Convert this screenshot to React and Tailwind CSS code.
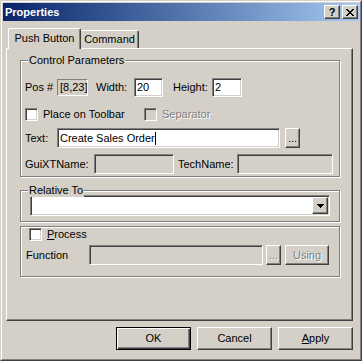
const sunken =
  "border border-t-[#808080] border-l-[#808080] border-r-white border-b-white shadow-[inset_1px_1px_0_#404040,inset_-1px_-1px_0_#d4d0c8]";
const raised =
  "border border-t-white border-l-white border-r-[#404040] border-b-[#404040] shadow-[inset_-1px_-1px_0_#808080]";
const disabledText = "text-[#808080] [text-shadow:1px_1px_0_#fff]";

function Group({ label, className = "", children }) {
  return (
    <div className={`relative border border-[#808080] shadow-[inset_1px_1px_0_#fff,1px_1px_0_#fff] ${className}`}>
      {label && (
        <span className="absolute -top-[8px] left-[7px] bg-[#d4d0c8] px-[1px] leading-[14px]">{label}</span>
      )}
      {children}
    </div>
  );
}

function Checkbox({ disabled }) {
  return <div className={`w-[13px] h-[13px] shrink-0 ${sunken} ${disabled ? "bg-[#d4d0c8]" : "bg-white"}`} />;
}

export default function App() {
  return (
    <div className="w-[362px] h-[361px] bg-[#d4d0c8] text-black text-[11px] font-['Liberation_Sans',Arial,sans-serif] border border-t-[#d4d0c8] border-l-[#d4d0c8] border-r-[#404040] border-b-[#404040]">
      <div className="h-full border border-t-white border-l-white border-r-[#808080] border-b-[#808080] p-[1px]">
        {/* title bar */}
        <div className="h-[18px] flex items-center bg-gradient-to-r from-[#0a246a] to-[#a6caf0] pl-[2px] pr-[1px]">
          <span className="text-white font-bold text-[11px] flex-1">Properties</span>
          <div className={`w-[16px] h-[14px] bg-[#d4d0c8] ${raised} flex items-center justify-center font-bold text-[11px] leading-none`}>
            ?
          </div>
          <div className={`w-[16px] h-[14px] ml-[2px] bg-[#d4d0c8] ${raised} flex items-center justify-center`}>
            <svg width="8" height="7" viewBox="0 0 8 7" shapeRendering="crispEdges">
              <path d="M0 0h2v1H0zM6 0h2v1H6zM1 1h2v1H1zM5 1h2v1H5zM2 2h4v1H2zM3 3h2v1H3zM2 4h4v1H2zM1 5h2v1H1zM5 5h2v1H5zM0 6h2v1H0zM6 6h2v1H6z" fill="#000" />
            </svg>
          </div>
        </div>

        <div className="pl-[3px] pt-[7px]">
          {/* tabs */}
          <div className="h-[20px] flex items-start w-[347px]">
            <div className="relative z-10 ml-[2px] w-[73px] h-[21px] bg-[#d4d0c8] border-t border-l border-white border-r border-r-[#404040] shadow-[inset_-1px_0_0_#808080] rounded-t-[2px] flex items-center justify-center pb-[2px]">
              Push Button
            </div>
            <div className="mt-[2px] w-[58px] h-[18px] border-t border-white border-r border-r-[#404040] shadow-[inset_-1px_0_0_#808080] rounded-tr-[2px] flex items-center justify-center">
              Command
            </div>
          </div>

          {/* tab page */}
          <div className="w-[347px] h-[273px] border border-t-white border-l-white border-r-[#404040] border-b-[#404040] shadow-[inset_-1px_-1px_0_#808080] pl-[13px] pt-[11px]">
            <Group label="Control Parameters" className="w-[320px] h-[117px] pl-[4px] pt-[17px]">
              <div className="flex items-center h-[19px]">
                <span className="w-[32px]">Pos #</span>
                <div className="w-[31px] h-[17px] border border-t-[#808080] border-l-[#808080] border-r-white border-b-white pl-[2px] leading-[15px]">
                  [8,23]
                </div>
                <span className="ml-[8px] w-[38px]">Width:</span>
                <div className={`w-[29px] h-[19px] bg-white ${sunken} pl-[2px] leading-[17px]`}>20</div>
                <span className="ml-[10px] w-[39px]">Height:</span>
                <div className={`w-[30px] h-[19px] bg-white ${sunken} pl-[2px] leading-[17px]`}>2</div>
              </div>
              <div className="flex items-center h-[13px] mt-[11px]">
                <div className="flex items-center w-[119px]">
                  <Checkbox />
                  <span className="ml-[5px]">Place on Toolbar</span>
                </div>
                <Checkbox disabled />
                <span className={`ml-[5px] ${disabledText}`}>Separator</span>
              </div>
              <div className="flex items-center h-[20px] mt-[7px]">
                <span className="w-[32px]">Text:</span>
                <div className={`w-[223px] h-[20px] bg-white ${sunken} pl-[2px] leading-[18px] flex items-center`}>
                  Create Sales Order
                  <span className="inline-block w-px h-[13px] bg-black" />
                </div>
                <div className={`ml-[5px] w-[15px] h-[20px] ${raised} flex items-end justify-center pb-[3px] leading-none`}>...</div>
              </div>
              <div className="flex items-center h-[20px] mt-[6px]">
                <span className="w-[69px]">GuiXTName:</span>
                <div className={`w-[80px] h-[20px] ${sunken}`} />
                <span className="ml-[4px] w-[59px]">TechName:</span>
                <div className={`w-[96px] h-[20px] ${sunken}`} />
              </div>
            </Group>

            <Group label="Relative To" className="w-[320px] h-[32px] mt-[13px] pl-[9px] pt-[4px]">
              <div className={`w-[300px] h-[21px] bg-white ${sunken} flex justify-end items-center pr-[1px]`}>
                <div className={`w-[16px] h-[17px] bg-[#d4d0c8] ${raised} flex items-center justify-center`}>
                  <svg width="7" height="4" viewBox="0 0 7 4" shapeRendering="crispEdges">
                    <path d="M0 0h7v1H0zM1 1h5v1H1zM2 2h3v1H2zM3 3h1v1H3z" fill="#000" />
                  </svg>
                </div>
              </div>
            </Group>

            <Group className="w-[320px] h-[51px] mt-[4px] pt-[1px]">
              <div className="flex items-center h-[13px] pl-[8px]">
                <Checkbox />
                <span className="ml-[5px]">
                  <span className="underline underline-offset-1">P</span>rocess
                </span>
              </div>
              <div className="flex items-center h-[20px] mt-[4px] pl-[5px]">
                <span className="w-[63px]">Function</span>
                <div className={`w-[174px] h-[20px] ${sunken}`} />
                <div className={`ml-[3px] w-[15px] h-[20px] ${raised} flex items-end justify-center pb-[3px] leading-none ${disabledText}`}>...</div>
                <div className={`ml-[4px] w-[44px] h-[20px] ${raised} flex items-center justify-center ${disabledText}`}>Using</div>
              </div>
            </Group>
          </div>

          {/* buttons */}
          <div className="w-[347px] flex justify-end gap-[6px] mt-[6px]">
            <div className="w-[75px] h-[23px] border border-black shadow-[inset_1px_1px_0_#fff,inset_-1px_-1px_0_#404040,inset_-2px_-2px_0_#808080] flex items-center justify-center">
              OK
            </div>
            <div className={`w-[75px] h-[23px] ${raised} flex items-center justify-center`}>Cancel</div>
            <div className={`w-[75px] h-[23px] ${raised} flex items-center justify-center`}>
              <span>
                <span className="underline underline-offset-1">A</span>pply
              </span>
            </div>
          </div>
        </div>
      </div>
    </div>
  );
}
